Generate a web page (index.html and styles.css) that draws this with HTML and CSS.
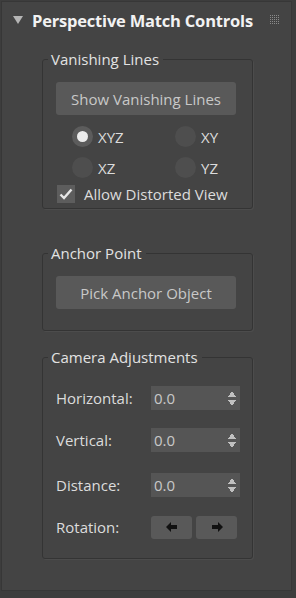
FILE: index.html
```html
<!DOCTYPE html>
<html lang="en">
<head>
    <meta charset="UTF-8">
    <meta name="viewport" content="width=device-width, initial-scale=1.0">
    <title>Perspective Match Controls</title>
    <link rel="stylesheet" href="styles.css">
</head>
<body>

<div class="panel">
    <div class="panel-header">
        <svg class="caret" width="10" height="8" viewBox="0 0 10 8"><path d="M0 0 H10 L5 8 Z" fill="#b5b5b5"/></svg>
        <span class="panel-title">Perspective Match Controls</span>
        <svg class="grip" width="9" height="9" viewBox="0 0 9 9" fill="#8a8a8a">
            <rect x="0" y="0" width="1" height="1"/><rect x="2" y="0" width="1" height="1"/><rect x="4" y="0" width="1" height="1"/><rect x="6" y="0" width="1" height="1"/><rect x="8" y="0" width="1" height="1"/>
            <rect x="0" y="2" width="1" height="1"/><rect x="2" y="2" width="1" height="1"/><rect x="4" y="2" width="1" height="1"/><rect x="6" y="2" width="1" height="1"/><rect x="8" y="2" width="1" height="1"/>
            <rect x="0" y="4" width="1" height="1"/><rect x="2" y="4" width="1" height="1"/><rect x="4" y="4" width="1" height="1"/><rect x="6" y="4" width="1" height="1"/><rect x="8" y="4" width="1" height="1"/>
            <rect x="0" y="6" width="1" height="1"/><rect x="2" y="6" width="1" height="1"/><rect x="4" y="6" width="1" height="1"/><rect x="6" y="6" width="1" height="1"/><rect x="8" y="6" width="1" height="1"/>
            <rect x="0" y="8" width="1" height="1"/><rect x="2" y="8" width="1" height="1"/><rect x="4" y="8" width="1" height="1"/><rect x="6" y="8" width="1" height="1"/><rect x="8" y="8" width="1" height="1"/>
        </svg>
    </div>

    <fieldset class="group group-lines">
        <legend>Vanishing Lines</legend>
        <button class="btn">Show Vanishing Lines</button>
        <div class="radios">
            <label class="radio"><span class="dot on"></span>XYZ</label>
            <label class="radio"><span class="dot"></span>XY</label>
            <label class="radio"><span class="dot"></span>XZ</label>
            <label class="radio"><span class="dot"></span>YZ</label>
        </div>
        <label class="check">
            <span class="box">
                <svg width="14" height="12" viewBox="0 0 14 12"><path d="M1.5 6.5 L5 10 L12.5 1.5" fill="none" stroke="#e6e6e6" stroke-width="2.4"/></svg>
            </span>
            Allow Distorted View
        </label>
    </fieldset>

    <fieldset class="group group-anchor">
        <legend>Anchor Point</legend>
        <button class="btn">Pick Anchor Object</button>
    </fieldset>

    <fieldset class="group group-camera">
        <legend>Camera Adjustments</legend>
        <div class="row">
            <span class="row-label">Horizontal:</span>
            <div class="spinner"><span>0.0</span><span class="arrows"></span></div>
        </div>
        <div class="row row-wide">
            <span class="row-label">Vertical:</span>
            <div class="spinner"><span>0.0</span><span class="arrows"></span></div>
        </div>
        <div class="row">
            <span class="row-label">Distance:</span>
            <div class="spinner"><span>0.0</span><span class="arrows"></span></div>
        </div>
        <div class="row">
            <span class="row-label">Rotation:</span>
            <div class="rot">
                <button class="rot-btn"><svg width="12" height="10" viewBox="0 0 12 10"><path d="M0 5 L5 0 V3 H11 V7 H5 V10 Z" fill="#111"/></svg></button>
                <button class="rot-btn"><svg width="12" height="10" viewBox="0 0 12 10"><path d="M12 5 L7 0 V3 H1 V7 H7 V10 Z" fill="#111"/></svg></button>
            </div>
        </div>
    </fieldset>
</div>

</body>
</html>
```

FILE: styles.css
```css
body {
    margin: 0;
    background-color: #3d3d3d;
    font-family: "Open Sans", "Noto Sans", sans-serif;
    font-size: 15px;
    color: #dcdcdc;
}
.panel {
    margin: 1px 0 0 1px;
    width: 291px;
    height: 590px;
    background-color: #444444;
    border: 1px solid #373737;
    box-sizing: border-box;
}
.panel-header {
    display: flex;
    align-items: center;
    height: 36px;
    padding: 0 12px 0 11px;
}
.caret {
    margin-right: 9px;
}
.panel-title {
    flex: 1;
    font-weight: bold;
    font-size: 16.5px;
    color: #f2f2f2;
    letter-spacing: -0.2px;
}
.grip {
    margin-top: -2px;
}
.group {
    margin: 0 0 0 40px;
    width: 211px;
    box-sizing: border-box;
    border: 1px solid #343434;
    border-radius: 3px;
    box-shadow: 1px 1px 0 #4c4c4c;
    padding: 0 0 0 13px;
    min-width: 0;
}
.group legend {
    padding: 0 4px 0 3px;
    margin-left: -8px;
    line-height: 20px;
    color: #e2e2e2;
}
.group-lines {
    margin-top: 11px;
    height: 160px;
    padding-top: 13px;
}
.group-anchor {
    margin-top: 34px;
    height: 88px;
    padding-top: 13px;
}
.group-camera {
    margin-top: 16px;
    height: 212px;
    padding-top: 19px;
}
.btn {
    display: block;
    width: 180px;
    height: 33px;
    border: none;
    border-radius: 3px;
    background-color: #595959;
    color: #c8c8c8;
    font-family: inherit;
    font-size: 15px;
}
.radios {
    display: grid;
    grid-template-columns: 103px 80px;
    margin: 11px 0 0 16px;
    row-gap: 10px;
}
.radio {
    display: flex;
    align-items: center;
    gap: 5px;
    height: 21px;
}
.dot {
    width: 21px;
    height: 21px;
    border-radius: 50%;
    background-color: #4e4e4e;
    display: flex;
    align-items: center;
    justify-content: center;
}
.dot.on {
    background-color: #5c5c5c;
}
.dot.on::after {
    content: "";
    width: 11px;
    height: 11px;
    border-radius: 50%;
    background-color: #ececec;
}
.check {
    display: flex;
    align-items: center;
    gap: 9px;
    margin: 6px 0 0 1px;
}
.box {
    width: 18px;
    height: 18px;
    background-color: #5d5d5d;
    display: flex;
    align-items: center;
    justify-content: center;
}
.row {
    display: flex;
    align-items: center;
    height: 24px;
    margin-bottom: 18px;
}
.row-wide {
    margin-bottom: 21px;
}
.row-label {
    width: 95px;
}
.spinner {
    display: flex;
    align-items: center;
    justify-content: space-between;
    width: 89px;
    height: 24px;
    background-color: #555555;
    color: #c8c8c8;
    padding: 0 4px 0 3px;
    box-sizing: border-box;
}
.arrows {
    width: 8px;
    height: 15px;
    background:
        linear-gradient(to bottom right, transparent 50%, #c0c0c0 50%) 0 0 / 4px 6px no-repeat,
        linear-gradient(to bottom left, transparent 50%, #c0c0c0 50%) 4px 0 / 4px 6px no-repeat,
        linear-gradient(to top right, transparent 50%, #c0c0c0 50%) 0 9px / 4px 6px no-repeat,
        linear-gradient(to top left, transparent 50%, #c0c0c0 50%) 4px 9px / 4px 6px no-repeat;
}
.rot {
    display: flex;
    gap: 4px;
}
.rot-btn {
    width: 41px;
    height: 23px;
    border: none;
    border-radius: 3px;
    background-color: #595959;
    padding: 0;
    display: flex;
    align-items: center;
    justify-content: center;
}
```
